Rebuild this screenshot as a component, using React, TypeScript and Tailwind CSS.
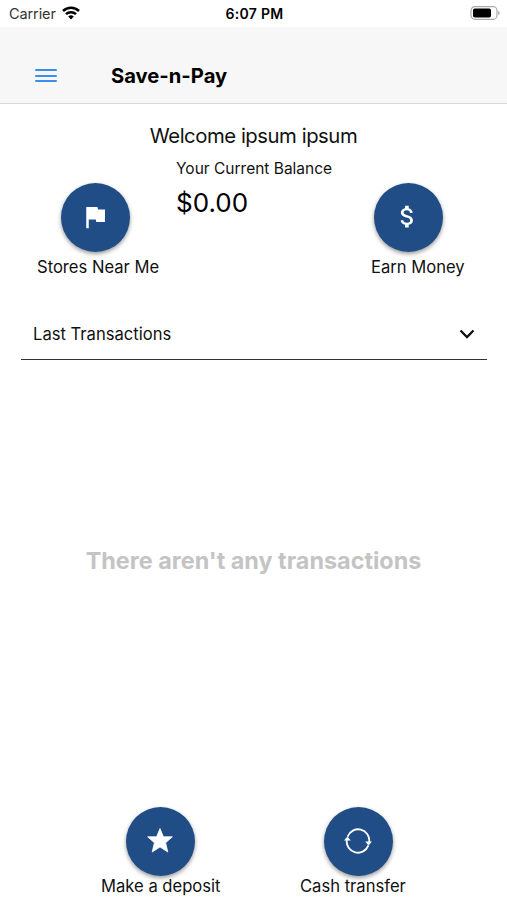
import type { ReactNode } from "react";
import { MdAttachMoney, MdFlag } from "react-icons/md";

type ActionProps = {
  label: string;
  labelClass: string;
  children: ReactNode;
};

function RoundAction({ label, labelClass, children }: ActionProps) {
  return (
    <button className="flex flex-col items-start">
      <span className="flex h-[69px] w-[69px] items-center justify-center rounded-full bg-[#204d86] pb-[2px] pr-[2px] text-white shadow-[0_2px_4px_rgba(0,0,0,0.4)]">
        {children}
      </span>
      <span className={`whitespace-nowrap text-[16.6px] leading-6 ${labelClass}`}>
        {label}
      </span>
    </button>
  );
}

function StarIcon() {
  return (
    <svg width="26" height="25" viewBox="0 0 26 25" fill="currentColor" stroke="currentColor" strokeWidth="0.8" strokeLinejoin="round">
      <path d="M13 0.6 16.4 8.8H25.4L18.6 14.8 20.8 24 13 18.9 5.2 24 7.4 14.8 0.6 8.8H9.6Z" />
    </svg>
  );
}

function SyncIcon() {
  return (
    <svg width="28" height="26" viewBox="0 0 28 26" fill="none" stroke="currentColor" strokeWidth="1.8">
      <path d="M3.6 8.6A11.2 11.2 0 0 1 25.2 14" />
      <path d="M24.4 17.4A11.2 11.2 0 0 1 2.8 12" />
      <path d="M21.2 13.6h6.8l-3.4 3.8z" fill="currentColor" stroke="none" />
      <path d="M0 12.4h6.8l-3.4-3.8z" fill="currentColor" stroke="none" />
    </svg>
  );
}

export default function App() {
  return (
    <div className="flex h-[900px] w-[507px] flex-col overflow-hidden bg-white font-['Inter',sans-serif] text-[#111]">

      {/* STATUS BAR */}
      <div className="grid h-[27px] shrink-0 grid-cols-3 items-center pl-[9px] pr-[7px]">
        <div className="flex items-center gap-1.5">
          <span className="text-[14.5px] leading-5 tracking-[-0.1px] text-[#333]">Carrier</span>
          <svg width="18" height="14" viewBox="0 0 18 14" className="-mt-0.5" fill="none" stroke="#000" strokeWidth="2.5">
            <path d="M1 5A11.4 11.4 0 0 1 17 5" />
            <path d="M4 8.2A7.1 7.1 0 0 1 14 8.2" />
            <path d="M9 13.4 6.2 10.6A4 4 0 0 1 11.8 10.6Z" fill="#000" stroke="none" />
          </svg>
        </div>
        <span className="text-center text-[14px] font-semibold leading-5 tracking-[0.3px] text-black">6:07 PM</span>
        <div className="-mt-0.5 flex justify-end">
          <svg width="30" height="14" viewBox="0 0 30 14">
            <rect x="1" y="0.7" width="26" height="12.6" rx="3.8" fill="none" stroke="#aaa" strokeWidth="1.2" />
            <rect x="3" y="2.5" width="18" height="9" rx="1.8" fill="#000" />
            <path d="M28.2 4.8v4.4q3-2.2 0-4.4" fill="#aaa" />
          </svg>
        </div>
      </div>

      {/* TOP BAR */}
      <div className="flex h-[77px] shrink-0 items-center border-b border-[#d9d9d9] bg-[#f7f7f7] pl-[35px] pt-[21px]">
        <button className="flex w-[22px] flex-col gap-[3.5px]">
          <span className="h-[2px] w-full rounded-full bg-[#3b8eea]" />
          <span className="h-[2px] w-full rounded-full bg-[#3b8eea]" />
          <span className="h-[2px] w-full rounded-full bg-[#3b8eea]" />
        </button>
        <h1 className="ml-[54px] text-[20.2px] font-bold leading-7 text-black">Save-n-Pay</h1>
      </div>

      {/* BALANCE */}
      <p className="mt-[18px] text-center text-[20.3px] leading-7 tracking-[-0.45px]">Welcome ipsum ipsum</p>
      <div className="flex shrink-0 items-start pl-[61px]">
        <div className="pt-[33px]">
          <RoundAction label="Stores Near Me" labelClass="-ml-[24px] -mr-[30px] mt-[3px]">
            <MdFlag size={30} />
          </RoundAction>
        </div>
        <div className="ml-[46px] w-[198px] pt-[7px]">
          <p className="text-[15.5px] leading-6">Your Current Balance</p>
          <p className="mt-1 text-[26px] leading-9 text-black">$0.00</p>
        </div>
        <div className="pt-[33px]">
          <RoundAction label="Earn Money" labelClass="-ml-[3px] mt-[3px]">
            <MdAttachMoney size={29} />
          </RoundAction>
        </div>
      </div>

      {/* TRANSACTIONS */}
      <button className="ml-[21px] mr-5 mt-8 flex h-[49px] shrink-0 items-center justify-between border-b-[1.5px] border-[#333] pb-0.5 pl-3 pr-3">
        <span className="text-[16.6px] leading-6">Last Transactions</span>
        <svg width="16" height="10" viewBox="0 0 16 10" fill="none" stroke="#111" strokeWidth="2.3">
          <path d="M1.5 1.5 8 8 14.5 1.5" />
        </svg>
      </button>
      <div className="flex grow items-center justify-center pb-[46px]">
        <p className="text-[23.4px] font-bold leading-8 text-[#c4c4c4]">There aren't any transactions</p>
      </div>

      {/* BOTTOM ACTIONS */}
      <div className="flex h-[93px] shrink-0 gap-[129px] pl-[126px]">
        <RoundAction label="Make a deposit" labelClass="-ml-[25px] -mr-[27px] -mt-0.5">
          <StarIcon />
        </RoundAction>
        <RoundAction label="Cash transfer" labelClass="-ml-[24px] -mr-[14px] -mt-0.5">
          <SyncIcon />
        </RoundAction>
      </div>

    </div>
  );
}
